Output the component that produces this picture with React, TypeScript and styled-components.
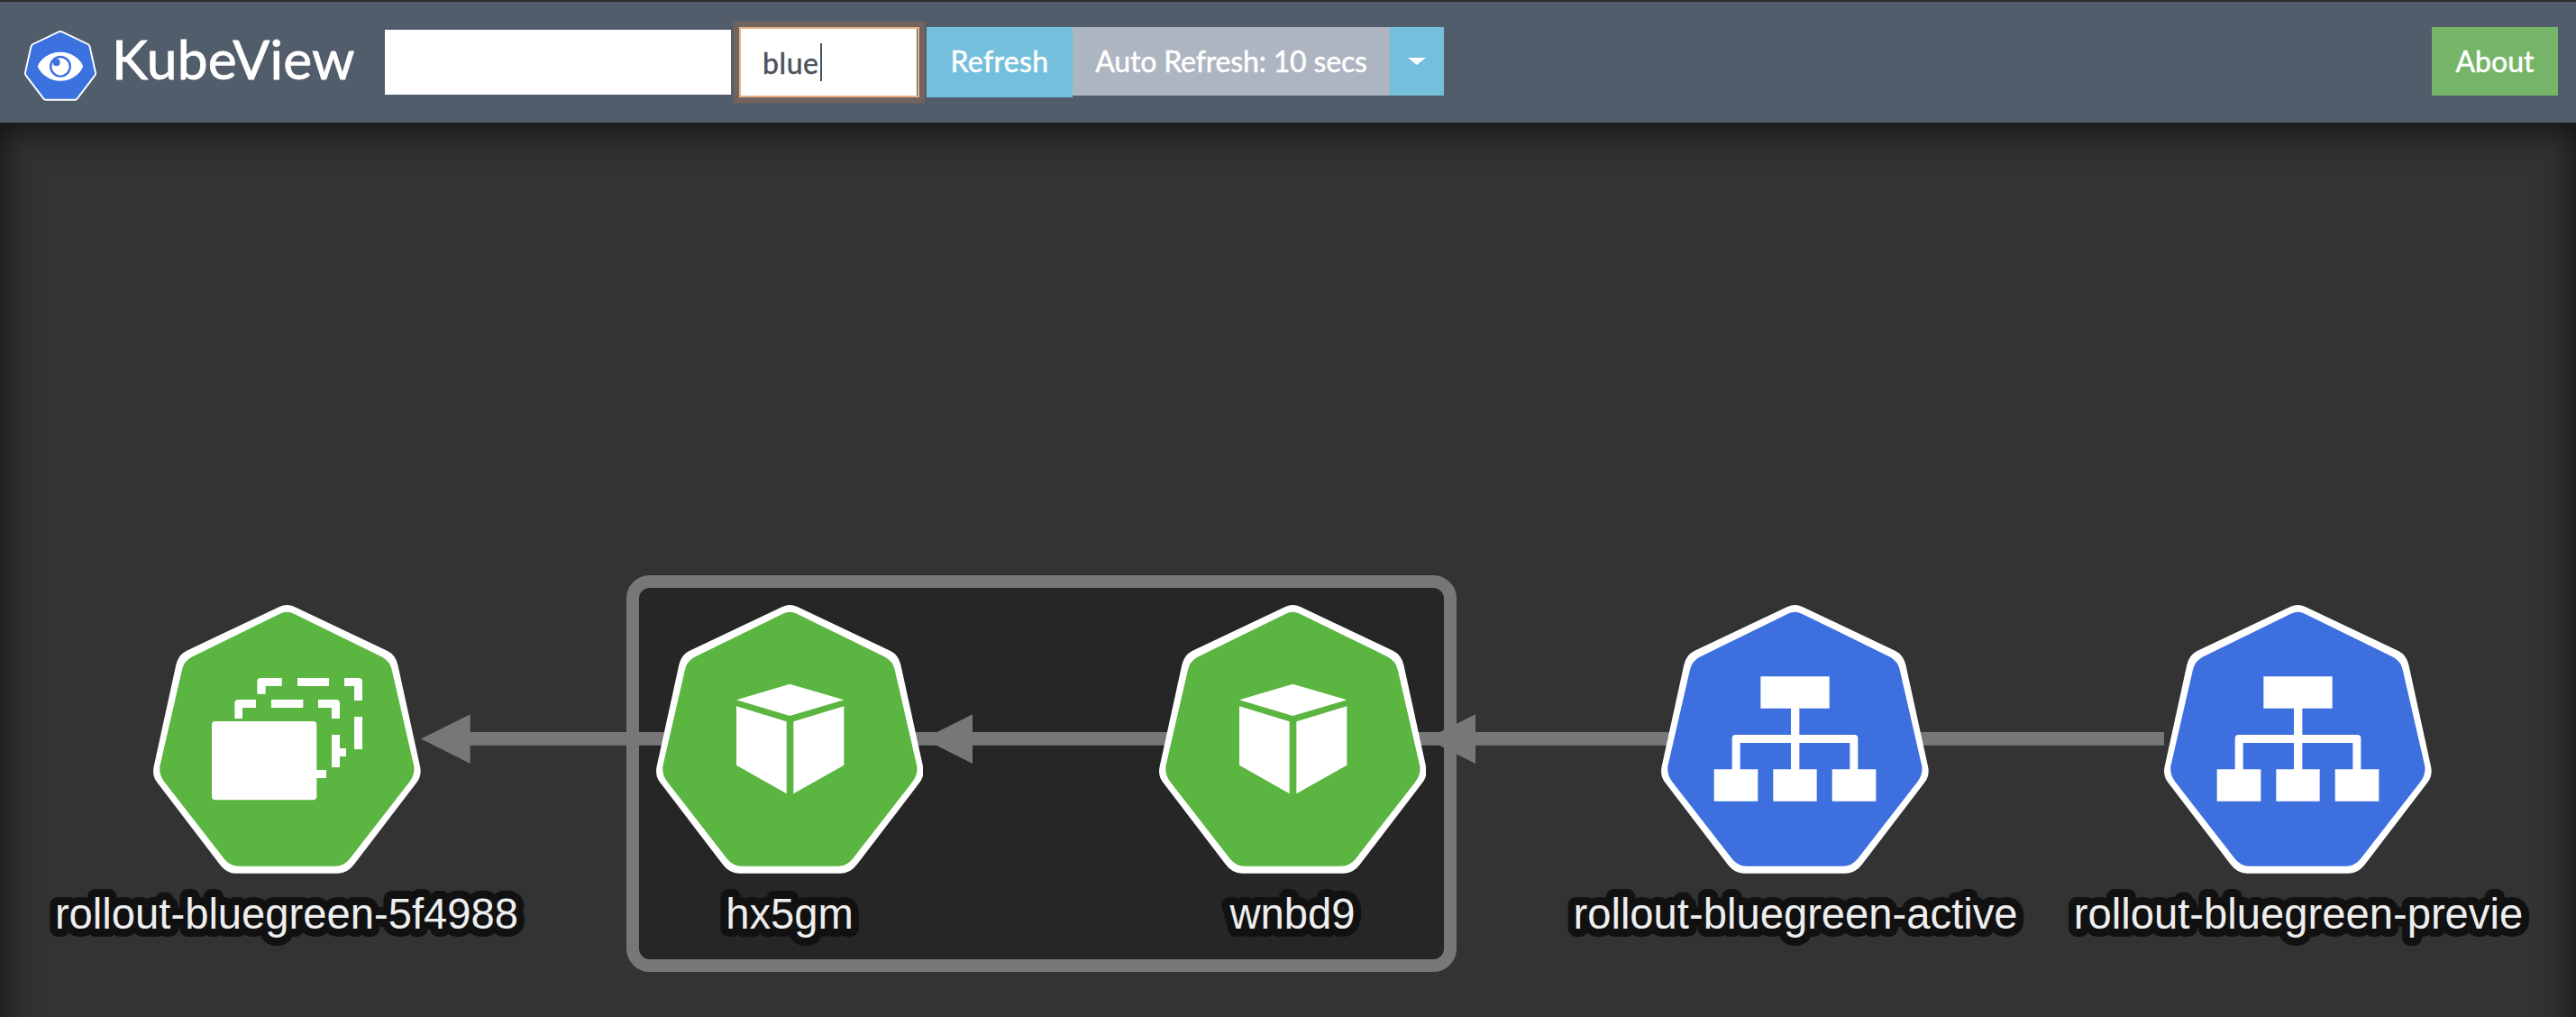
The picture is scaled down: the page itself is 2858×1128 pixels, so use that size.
import React from 'react';
import styled, { createGlobalStyle } from 'styled-components';

const GlobalStyle = createGlobalStyle`
  * { box-sizing: border-box; }
  body { margin: 0; background: #333333; font-family: Lato, "Liberation Sans", sans-serif; }
  button, input { font: inherit; border: 0; border-radius: 0; }
`;

const Page = styled.div`
  display: flex;
  flex-direction: column;
  width: 100%;
  height: 1128px;
  border-top: 2px solid #2b2b2b;
  overflow: hidden;
`;

const Navbar = styled.header`
  display: flex;
  align-items: flex-start;
  flex: none;
  height: 134px;
  padding: 28px 20px 0 27px;
  background: #525d6b;
  font-size: 32px;
  line-height: 48px;
`;

const Brand = styled.div`
  display: flex;
  align-items: flex-start;
  width: 400px;
  gap: 17px;
  color: #fff;
  font-size: 60.5px;
  line-height: 70px;
  letter-spacing: 0.2px;
  white-space: nowrap;
  -webkit-text-stroke: 0.8px #fff;
`;

const Logo = styled.svg`
  display: block;
  flex: none;
  width: 80px;
  height: 78px;
  margin-top: 4px;
`;

const NamespaceSelect = styled.div`
  width: 384px;
  height: 72px;
  margin: 3px 9px 0 0;
  background: #fff;
`;

const Filter = styled.div`
  display: flex;
  align-items: center;
  width: 200px;
  height: 78px;
  margin-right: 8px;
  padding: 2px 0 0 24px;
  border: 2px solid #e6b288;
  background: #fff;
  box-shadow: 0 0 0 6.4px #72635f, inset -1px 0 0 #525d6b;
  color: #4b535c;
  letter-spacing: 0.6px;
  -webkit-text-stroke: 0.5px #4b535c;
`;

const Caret = styled.span`
  width: 2px;
  height: 42px;
  margin: -2px 0 0 1px;
  background: #4b535c;
`;

const Button = styled.button<{ $bg: string; $w: number; $h?: number; $track?: number }>`
  flex: none;
  display: flex;
  justify-content: center;
  width: ${p => p.$w}px;
  height: ${p => p.$h ?? 76}px;
  padding: 14px 0 0;
  background: ${p => p.$bg};
  color: #fff;
  line-height: 48px;
  letter-spacing: ${p => p.$track ?? 0}px;
  white-space: nowrap;
  -webkit-text-stroke: 0.5px #fff;
`;

const Triangle = styled.span`
  margin-top: 20px;
  width: 0;
  height: 0;
  border: 10px solid transparent;
  border-top: 8px solid #fff;
  border-bottom: 0;
`;

const Spacer = styled.div`
  flex: 1;
`;

const Canvas = styled.main`
  position: relative;
  flex: 1;
  background: #333333;
  &::after {
    content: '';
    position: absolute;
    inset: 0 0 -60px;
    box-shadow: inset 0 6px 40px rgba(0, 0, 0, 0.7);
    pointer-events: none;
  }
`;

const Group = styled.div`
  position: absolute;
  left: 695px;
  top: 502px;
  width: 921px;
  height: 440px;
  border: 14px solid #777;
  border-radius: 26px;
  background: #262626;
`;

const Edges = styled.svg`
  position: absolute;
  left: 0;
  top: 0;
  width: 2858px;
  height: 992px;
`;

const NodeBox = styled.div<{ $x: number }>`
  position: absolute;
  left: ${p => p.$x - 300}px;
  top: 535px;
  width: 600px;
  display: flex;
  flex-direction: column;
  align-items: center;
`;

const NodeIcon = styled.svg`
  display: block;
  width: 296.7px;
  height: 297.7px;
`;

const Label = styled.svg`
  display: block;
  width: 600px;
  height: 90px;
`;

const LabelText = styled.text`
  font-family: "Liberation Sans", Helvetica, sans-serif;
  font-size: 47.2px;
  text-anchor: middle;
  fill: #eee;
  stroke: #111;
  stroke-width: 18px;
  stroke-linejoin: round;
  stroke-linecap: round;
  paint-order: stroke fill;
`;

const OUTER =
  'M480 69 Q505 57 530 69 L840 216 Q867 230 874 262 L948 600 Q955 631 936 655 L728 927 Q706 956 675 956 L335 956 Q304 956 282 927 L74 655 Q55 631 62 600 L136 262 Q143 230 170 216 Z';
const INNER =
  'M482 92 Q505 81 528 92 L822 236 Q848 250 854 278 L928 600 Q931 628 914 650 L713 909 Q694 932 666 932 L344 932 Q316 932 297 909 L96 650 Q79 628 82 600 L156 278 Q162 250 188 236 Z';

type Kind = 'replicaset' | 'pod' | 'service';

const ReplicaSet = () => (
  <>
    <rect x="255" y="450" width="349" height="262" rx="12" />
    <path d="M600 612H636V639H600ZM654 495H681V540H702V567H681V603H654Z" />
    <path d="M331 441V390Q331 378 343 378H402V405H357V441ZM453 378H559V405H453ZM609 378H669Q681 378 681 390V441H654V405H609Z" />
    <path d="M406 359V318Q406 306 418 306H488V333H434V359ZM540 306H645V333H540ZM696 306H744Q756 306 756 318V381H729V333H696ZM729 435H756V543H729Z" />
  </>
);

const Pod = () => (
  <path d="M505 326L685 379L505 432L327 379ZM327 400L494 451V691L327 596ZM517 451L685 400V596L517 691Z" />
);

const Service = () => (
  <>
    <path d="M391 301H620V407H391ZM492 400H520V615H492Z" />
    <path d="M296 615V507Q296 495 308 495H703Q715 495 715 507V615H688V522H323V615Z" />
    <path d="M236 610H382V716H236ZM433 610H578V716H433ZM629 610H775V716H629Z" />
  </>
);

const glyphs: Record<Kind, React.FC> = { replicaset: ReplicaSet, pod: Pod, service: Service };

const nodes: { x: number; kind: Kind; label: string }[] = [
  { x: 318.3, kind: 'replicaset', label: 'rollout-bluegreen-5f4988' },
  { x: 876, kind: 'pod', label: 'hx5gm' },
  { x: 1434, kind: 'pod', label: 'wnbd9' },
  { x: 1991.7, kind: 'service', label: 'rollout-bluegreen-active' },
  { x: 2549.5, kind: 'service', label: 'rollout-bluegreen-previe' },
];

const Node = ({ x, kind, label }: { x: number; kind: Kind; label: string }) => {
  const Glyph = glyphs[kind];
  return (
    <NodeBox $x={x}>
      <NodeIcon viewBox="60 63 890 893" preserveAspectRatio="none">
        <path d={OUTER} fill="#fff" />
        <path d={INNER} fill={kind === 'service' ? '#3d6fde' : '#5bb541'} />
        <g fill="#fff">
          <Glyph />
        </g>
      </NodeIcon>
      <Label>
        <LabelText x="300" y="61">{label}</LabelText>
      </Label>
    </NodeBox>
  );
};

export default function App() {
  return (
    <Page>
      <GlobalStyle />
      <Navbar>
        <Brand>
          <Logo viewBox="27 34 80 78">
            <path
              d="M65.5 35.2Q67 34.7 68.5 35.2L97.5 49Q99.2 50 99.6 51.8L106 80.5Q106.4 82.2 105.3 83.6L85.7 109.3Q84.5 110.8 82.6 110.8L51.4 110.8Q49.5 110.8 48.3 109.3L28.7 83.6Q27.6 82.2 28 80.5L34.4 51.8Q34.8 50 36.5 49Z"
              fill="#3b72df"
              stroke="#fff"
              strokeWidth="1.9"
            />
            <path d="M41.8 73.5C45 65 55 57.8 67 57.8S89 65 92.2 73.5C89 82 79 89.8 67 89.8S45 82 41.8 73.5Z" fill="#fff" />
            <circle cx="67" cy="73.8" r="10.8" fill="#fff" stroke="#3b72df" strokeWidth="2.4" />
            <circle cx="62.7" cy="69.3" r="4" fill="#3b72df" />
          </Logo>
          KubeView
        </Brand>
        <NamespaceSelect />
        <Filter>
          blue
          <Caret />
        </Filter>
        <Button $bg="#74bfdc" $w={162} $h={78} $track={0.35}>Refresh</Button>
        <Button $bg="#adb5c1" $w={352} $track={-0.15}>Auto Refresh: 10 secs</Button>
        <Button $bg="#74bfdc" $w={60}><Triangle /></Button>
        <Spacer />
        <Button $bg="#76b568" $w={140}>About</Button>
      </Navbar>
      <Canvas>
        <Group />
        <Edges viewBox="0 136 2858 992">
          <path d="M520 819.4H2401" stroke="#777" strokeWidth="14.6" />
          <path d="M467 819.5L521.7 792.3V847ZM1024.7 819.5L1079 792.3V847ZM1582.5 819.5L1637 792.3V847Z" fill="#777" />
        </Edges>
        {nodes.map(n => (
          <Node key={n.label} {...n} />
        ))}
      </Canvas>
    </Page>
  );
}
